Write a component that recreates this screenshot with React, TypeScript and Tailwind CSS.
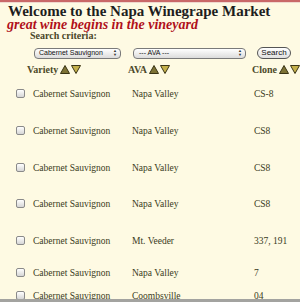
import React from "react";

const rows = [
  { v: "Cabernet Sauvignon", a: "Napa Valley", c: "CS-8", h: "h-[37px]" },
  { v: "Cabernet Sauvignon", a: "Napa Valley", c: "CS8", h: "h-[37px]" },
  { v: "Cabernet Sauvignon", a: "Napa Valley", c: "CS8", h: "h-[36px]" },
  { v: "Cabernet Sauvignon", a: "Napa Valley", c: "CS8", h: "h-[37px]" },
  { v: "Cabernet Sauvignon", a: "Mt. Veeder", c: "337, 191", h: "h-[32px]" },
  { v: "Cabernet Sauvignon", a: "Napa Valley", c: "7", h: "h-[23px]" },
  { v: "Cabernet Sauvignon", a: "Coombsville", c: "04", h: "h-[27px]" },
];

function Sort() {
  return (
    <span className="inline-flex items-center gap-[1px] ml-[2px]">
      <svg width="10" height="9" viewBox="0 0 10 9">
        <polygon points="5,0.5 9.5,8.5 0.5,8.5" fill="#7d7235" stroke="#3a3414" strokeWidth="1" />
      </svg>
      <svg width="10" height="9" viewBox="0 0 10 9">
        <polygon points="0.5,0.5 9.5,0.5 5,8.5" fill="#c4b04a" stroke="#3a3414" strokeWidth="1" />
      </svg>
    </span>
  );
}

function Checkbox() {
  return (
    <div className="w-[9px] h-[9px] rounded-[2px] border border-[#8a8a8a] bg-gradient-to-b from-[#ffffff] to-[#d6d6d6]" />
  );
}

function Stepper() {
  return (
    <span className="flex flex-col items-center leading-[4px] text-[4px] text-[#333] shrink-0">
      <span>▲</span>
      <span>▼</span>
    </span>
  );
}

export default function App() {
  return (
    <div
      className="w-[300px] h-[302px] overflow-hidden bg-[#fefae3] relative"
      style={{ fontFamily: '"Liberation Serif", "DejaVu Serif", serif' }}
    >
      <div className="h-[2px] bg-[#c96868]" />
      <div className="h-[1px] bg-[#f0d9cf]" />
      <div className="pl-[8px]">
        <h1 className="text-[15px] font-bold leading-[14px] mt-[1px] text-[#1e1e1e] whitespace-nowrap">
          Welcome to the Napa Winegrape Market
        </h1>
        <div className="text-[14px] italic font-bold leading-[13px] text-[#b0101a] -ml-[1px] whitespace-nowrap">
          great wine begins in the vineyard
        </div>
        <div className="pl-[22px] text-[10px] font-bold leading-[10px] text-[#4a4628]">
          Search criteria:
        </div>
      </div>
      <div className="flex items-center mt-[6px] h-[12px]" style={{ fontFamily: '"Liberation Sans", Arial, sans-serif' }}>
        <div className="ml-[34px] w-[87px] h-[11px] rounded-[4px] border border-[#7a7a7a] bg-gradient-to-b from-[#ffffff] to-[#dcdcdc] flex items-center justify-between pl-[4px] pr-[3px] text-[7px] text-[#111] whitespace-nowrap">
          <span>Cabernet Sauvignon</span>
          <Stepper />
        </div>
        <div className="ml-[12px] w-[113px] h-[11px] rounded-[4px] border border-[#7a7a7a] bg-gradient-to-b from-[#ffffff] to-[#dcdcdc] flex items-center justify-between pl-[5px] pr-[3px] text-[7px] text-[#111] whitespace-nowrap">
          <span>--- AVA ---</span>
          <Stepper />
        </div>
        <div className="ml-[11px] w-[34px] h-[12px] rounded-full border border-[#555] bg-gradient-to-b from-[#ffffff] to-[#e0e0e0] flex items-center justify-center text-[8px] text-[#111]">
          Search
        </div>
      </div>
      <div className="grid grid-cols-[14px_100px_123px_1fr] pl-[16px] mt-[3px] h-[14px] items-center text-[10px] font-bold text-[#4d4a2a] whitespace-nowrap">
        <div />
        <div className="-ml-[3px] flex items-center">Variety<Sort /></div>
        <div className="-ml-[2px] flex items-center">AVA<Sort /></div>
        <div className="-ml-[1px] flex items-center">Clone<Sort /></div>
      </div>
      <div className="mt-[12px]">
        {rows.map((r, i) => (
          <div
            key={i}
            className={`grid grid-cols-[17px_99px_122px_1fr] pl-[16px] items-start text-[9.5px] text-[#3a3a22] whitespace-nowrap ${r.h}`}
          >
            <div className="pt-[1px]"><Checkbox /></div>
            <div className="leading-[12px]">{r.v}</div>
            <div className="leading-[12px]">{r.a}</div>
            <div className="leading-[12px]">{r.c}</div>
          </div>
        ))}
      </div>
      <div className="absolute left-0 right-0 bottom-0 h-[3px] bg-[#a3a3a0]" />
    </div>
  );
}
